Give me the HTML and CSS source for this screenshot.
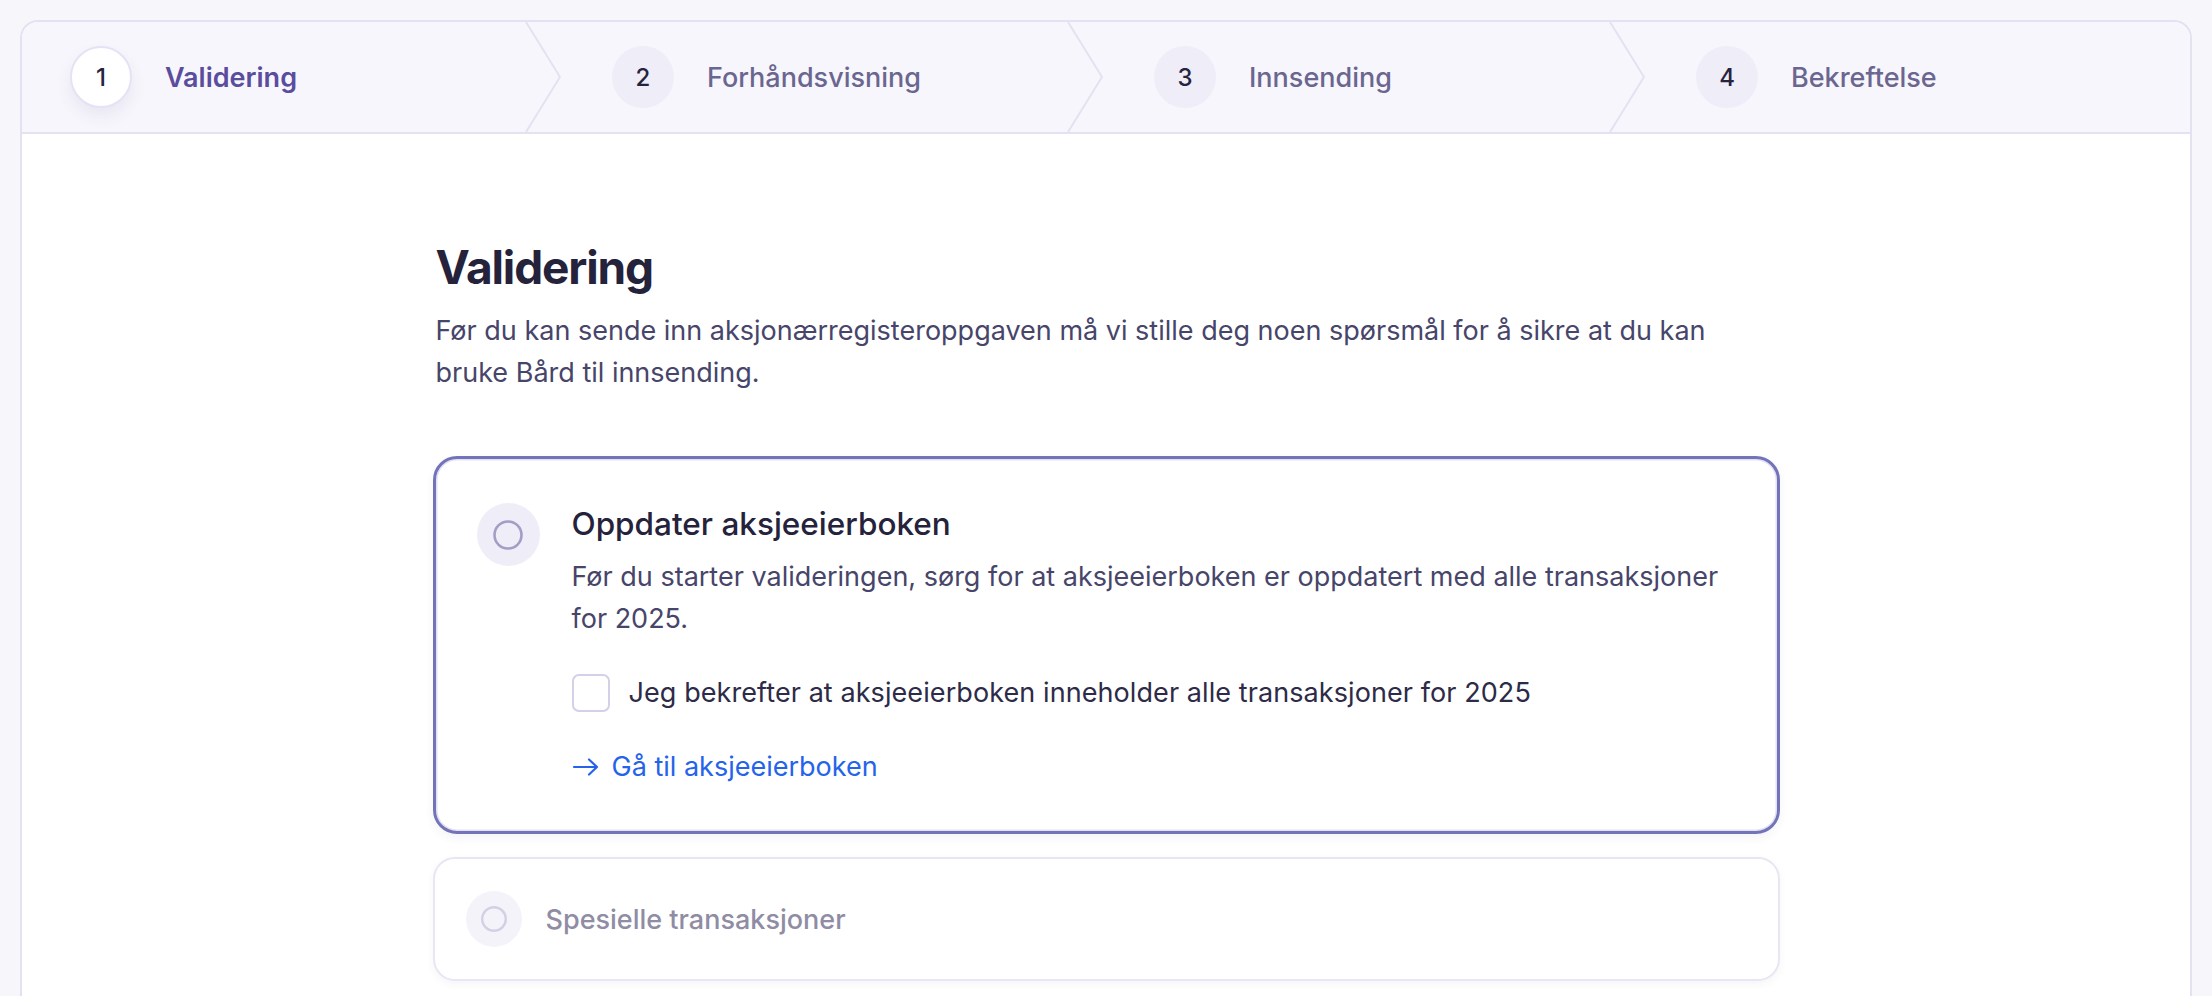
FILE: index.html
```html
<!DOCTYPE html>
<html lang="no">
<head>
<meta charset="utf-8">
<title>Validering</title>
<link rel="stylesheet" href="styles.css">
</head>
<body>
<div class="page">
  <div class="panel">
    <nav class="steps">
      <div class="step">
        <div class="step-inner">
          <span class="step-num current">1</span>
          <span class="step-label current">Validering</span>
        </div>
        <svg class="chev" viewBox="0 0 36 110" preserveAspectRatio="none"><polyline points="1,0 35,55 1,110" fill="none" stroke="#e4e2f1" stroke-width="2"/></svg>
      </div>
      <div class="step">
        <div class="step-inner">
          <span class="step-num">2</span>
          <span class="step-label">Forhåndsvisning</span>
        </div>
        <svg class="chev" viewBox="0 0 36 110" preserveAspectRatio="none"><polyline points="1,0 35,55 1,110" fill="none" stroke="#e4e2f1" stroke-width="2"/></svg>
      </div>
      <div class="step">
        <div class="step-inner">
          <span class="step-num">3</span>
          <span class="step-label">Innsending</span>
        </div>
        <svg class="chev" viewBox="0 0 36 110" preserveAspectRatio="none"><polyline points="1,0 35,55 1,110" fill="none" stroke="#e4e2f1" stroke-width="2"/></svg>
      </div>
      <div class="step">
        <div class="step-inner">
          <span class="step-num">4</span>
          <span class="step-label">Bekreftelse</span>
        </div>
      </div>
    </nav>

    <main class="content">
      <h1 class="title">Validering</h1>
      <p class="intro">Før du kan sende inn aksjonærregisteroppgaven må vi stille deg noen spørsmål for å sikre at du kan bruke Bård til innsending.</p>

      <section class="card active">
        <div class="status">
          <svg width="32" height="32" viewBox="0 0 32 32"><circle cx="16" cy="16" r="13.5" fill="none" stroke="#a29ec5" stroke-width="2.6"/></svg>
        </div>
        <div class="card-body">
          <h2 class="card-title">Oppdater aksjeeierboken</h2>
          <p class="card-desc">Før du starter valideringen, sørg for at aksjeeierboken er oppdatert med alle transaksjoner for 2025.</p>
          <label class="check-row">
            <span class="checkbox"></span>
            <span class="check-label">Jeg bekrefter at aksjeeierboken inneholder alle transaksjoner for 2025</span>
          </label>
          <a class="link" href="#">
            <svg width="28" height="20" viewBox="0 0 28 20"><path d="M2 10H25M17 2.5L25 10L17 17.5" fill="none" stroke="#2563eb" stroke-width="2.2" stroke-linecap="round" stroke-linejoin="round"/></svg>
            <span>Gå til aksjeeierboken</span>
          </a>
        </div>
      </section>

      <section class="card inactive">
        <div class="status small">
          <svg width="28" height="28" viewBox="0 0 28 28"><circle cx="14" cy="14" r="11.8" fill="none" stroke="#d3d0e6" stroke-width="2.4"/></svg>
        </div>
        <div class="inactive-title">Spesielle transaksjoner</div>
      </section>
    </main>
  </div>
</div>
</body>
</html>
```

FILE: styles.css
```css
* { box-sizing: border-box; }

html, body {
  margin: 0;
  padding: 0;
}

body {
  background: #f7f6fb;
  font-family: Inter, "Noto Sans", "Liberation Sans", sans-serif;
  color: #25223b;
}

.page {
  padding: 20px 20px 0;
}

.panel {
  background: #ffffff;
  border: 2px solid #e4e2f1;
  border-bottom: none;
  border-radius: 18px 18px 0 0;
  min-height: 1100px;
  overflow: hidden;
}

/* Stepper */
.steps {
  display: grid;
  grid-template-columns: repeat(4, 1fr);
  height: 112px;
  background: #f7f6fc;
  border-bottom: 2px solid #e4e2f1;
}

.step {
  display: flex;
  align-items: stretch;
}

.step-inner {
  flex: 1;
  display: flex;
  align-items: center;
  gap: 33px;
  padding-left: 48px;
}

.chev {
  width: 36px;
  height: 110px;
  flex: none;
  margin-right: 3px;
}

.step-num {
  width: 62px;
  height: 62px;
  border-radius: 50%;
  background: #efedf8;
  display: flex;
  align-items: center;
  justify-content: center;
  font-size: 24px;
  font-weight: 500;
  color: #26233d;
}

.step-num.current {
  background: #ffffff;
  border: 2px solid #e5e2f5;
  box-shadow: 0 8px 16px rgba(70, 60, 130, 0.08);
}

.step-label {
  font-size: 27px;
  font-weight: 500;
  color: #6b6690;
}

.step-label.current {
  color: #5a4d9e;
  font-weight: 600;
}

/* Content */
.content {
  max-width: 1347px;
  margin: 0 auto;
  padding-top: 104px;
}

.title {
  margin: 0;
  font-size: 46px;
  line-height: 58px;
  font-weight: 700;
  letter-spacing: -0.025em;
  color: #25223b;
  padding-left: 3px;
}

.intro {
  margin: 14px 0 0;
  padding-left: 3px;
  font-size: 27px;
  line-height: 42px;
  color: #47456a;
  max-width: 1320px;
}

.card {
  display: flex;
  background: #fff;
}

.card.active {
  margin-top: 62px;
  border: 3px solid #7373b9;
  border-radius: 24px;
  padding: 44px 24px 43px 41px;
  gap: 32px;
  box-shadow: inset 0 0 0 1.5px #e3e0f3, 0 4px 10px rgba(60, 50, 120, 0.06);
}

.status {
  width: 63px;
  height: 63px;
  flex: none;
  border-radius: 50%;
  background: #efedf8;
  display: flex;
  align-items: center;
  justify-content: center;
}

.status.small {
  width: 56px;
  height: 56px;
  background: #f4f3fa;
}

.card-body {
  flex: 1;
}

.card-title {
  margin: 0;
  font-size: 31.5px;
  line-height: 42px;
  font-weight: 500;
  color: #25223b;
}

.card-desc {
  margin: 11px 0 0;
  font-size: 27px;
  line-height: 42px;
  color: #47456a;
}

.check-row {
  display: flex;
  align-items: center;
  gap: 19px;
  margin-top: 32px;
  min-height: 42px;
}

.checkbox {
  width: 38px;
  height: 38px;
  border: 2px solid #d3d0e8;
  border-radius: 7px;
  background: #fff;
  flex: none;
}

.check-label {
  font-size: 27px;
  line-height: 42px;
  color: #2d2b47;
  letter-spacing: 0.003em;
}

.link {
  display: flex;
  align-items: center;
  gap: 12px;
  margin-top: 32px;
  font-size: 27px;
  line-height: 42px;
  color: #2563eb;
  text-decoration: none;
}

.card.inactive {
  margin-top: 23px;
  border: 2px solid #e8e6f3;
  border-radius: 22px;
  padding: 32px 30px 32px 31px;
  gap: 24px;
  align-items: center;
  box-shadow: 0 3px 8px rgba(60, 50, 120, 0.05);
}

.inactive-title {
  font-size: 27px;
  font-weight: 500;
  color: #8f8ca4;
}
```
